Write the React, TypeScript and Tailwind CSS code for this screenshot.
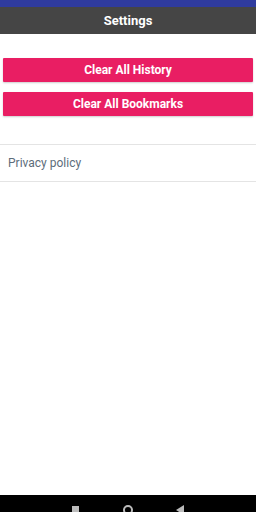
export default function App() {
  return (
    <div className="w-[256px] h-[512px] flex flex-col bg-white overflow-hidden" style={{ fontFamily: 'Roboto, "Liberation Sans", sans-serif' }}>
      {/* status bar */}
      <div className="h-[7px] bg-[#2f3b9e]" />
      {/* toolbar */}
      <div className="h-[27px] bg-[#454545] flex items-center justify-center">
        <span className="text-white font-bold text-[13px]">Settings</span>
      </div>

      <div className="flex-1 flex flex-col">
        <div className="px-[3px] pt-[24px] flex flex-col gap-[10px]">
          <button className="h-[24px] w-full bg-[#e91e63] text-white font-bold text-[12px] rounded-[1px] shadow-[0_1px_2px_rgba(0,0,0,0.2)]">
            Clear All History
          </button>
          <button className="h-[24px] w-full bg-[#e91e63] text-white font-bold text-[12px] rounded-[1px] shadow-[0_1px_2px_rgba(0,0,0,0.2)]">
            Clear All Bookmarks
          </button>
        </div>

        <div className="mt-[28px] border-t border-b border-[#e4e4e4] h-[38px] flex items-center px-[8px]">
          <span className="text-[12px] text-[#5d6d7a]">Privacy policy</span>
        </div>
      </div>

      {/* nav bar */}
      <div className="h-[17px] bg-black relative">
        <div className="absolute left-[72px] top-[11px] w-[7px] h-[7px] bg-[#bbb]" />
        <div className="absolute left-[123px] top-[10px] w-[10px] h-[10px] rounded-full border-2 border-[#bbb]" />
        <svg className="absolute left-[176px] top-[10px]" width="8" height="10" viewBox="0 0 8 10">
          <path d="M8 0 L0 5 L8 10 Z" fill="#bbb" />
        </svg>
      </div>
    </div>
  );
}
